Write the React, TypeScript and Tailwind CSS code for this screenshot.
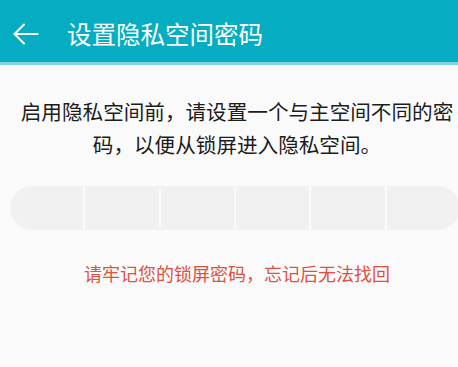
import React from "react";

const BackArrow = () => (
  <svg width="26" height="22" viewBox="0 0 26 22" fill="none" stroke="white" strokeWidth="2" strokeLinecap="round" strokeLinejoin="round">
    <path d="M1.5 11H24.5" />
    <path d="M11 1.5L1.5 11L11 20.5" />
  </svg>
);

const App = () => {
  const cells = [0, 1, 2, 3, 4, 5];

  return (
    <div
      className="w-[458px] h-[367px] bg-[#fafafa] overflow-hidden"
      style={{ fontFamily: '"Noto Sans CJK SC", "Noto Sans", sans-serif' }}
    >
      {/* Title bar */}
      <div className="h-[65px] bg-[#05adc3] flex items-center pl-[13px] pt-[6px] border-b-[3px] border-[#80d3de]">
        <BackArrow />
        <h1 className="ml-[28px] text-[24.5px] leading-none text-white">设置隐私空间密码</h1>
      </div>

      {/* Hint */}
      <p className="mt-[30px] pl-[20px] pr-[4px] text-center text-[20.6px] leading-[33px] text-[#1c1c1c]">
        启用隐私空间前，请设置一个与主空间不同的密码，以便从锁屏进入隐私空间。
      </p>

      {/* Password cells */}
      <div className="mt-[25px] ml-[10px] w-[450px] h-[44px] rounded-full overflow-hidden flex gap-[2px]">
        {cells.map((i) => (
          <div key={i} className="flex-1 bg-[#f1f1f1]" />
        ))}
      </div>

      {/* Warning */}
      <p className="mt-[31px] pl-[20px] pr-[4px] text-center text-[18px] leading-[24px] text-[#e0513e]">
        请牢记您的锁屏密码，忘记后无法找回
      </p>
    </div>
  );
};

export default App;
